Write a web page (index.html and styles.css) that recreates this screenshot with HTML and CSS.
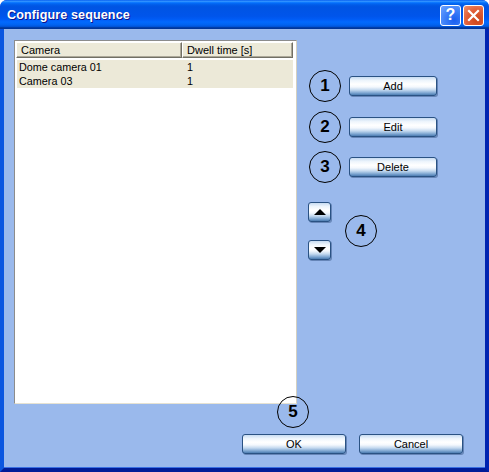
FILE: index.html
```html
<!DOCTYPE html>
<html>
<head>
<meta charset="utf-8">
<link rel="stylesheet" href="styles.css">
</head>
<body>
<div class="window">
  <div class="titlebar">
    <span class="title">Configure sequence</span>
    <div class="tb-buttons">
      <span class="tb-btn help">?</span>
      <span class="tb-btn close">
        <svg width="13" height="13" viewBox="0 0 13 13"><path d="M2 2 L11 11 M11 2 L2 11" stroke="#fff" stroke-width="2.2" stroke-linecap="square"/></svg>
      </span>
    </div>
  </div>
  <div class="client">
    <div class="main">
      <div class="listbox">
        <div class="lv-header">
          <div class="hcell c1">Camera</div>
          <div class="hcell c2">Dwell time [s]</div>
        </div>
        <div class="lv-row"><span class="cell c1">Dome camera 01</span><span class="cell c2">1</span></div>
        <div class="lv-row"><span class="cell c1">Camera 03</span><span class="cell c2">1</span></div>
      </div>
      <div class="side">
        <div class="actions">
          <div class="act"><span class="callout">1</span><button class="btn act-btn">Add</button></div>
          <div class="act"><span class="callout">2</span><button class="btn act-btn">Edit</button></div>
          <div class="act"><span class="callout">3</span><button class="btn act-btn">Delete</button></div>
        </div>
        <div class="order">
          <div class="arrows">
            <button class="btn arrow"><span class="tri up"></span></button>
            <button class="btn arrow"><span class="tri down"></span></button>
          </div>
          <span class="callout">4</span>
        </div>
      </div>
    </div>
    <div class="footer">
      <button class="btn foot-btn">OK</button>
      <button class="btn foot-btn">Cancel</button>
    </div>
    <span class="callout c5">5</span>
  </div>
</div>
</body>
</html>
```
FILE: styles.css
```css
html, body {
  margin: 0;
  padding: 0;
  background: #ffffff;
}

.window {
  width: 489px;
  height: 472px;
  display: flex;
  flex-direction: column;
  font-family: "Liberation Sans", Arial, sans-serif;
  background: #0831d9;
  border-radius: 7px 7px 0 0;
  overflow: hidden;
}

.titlebar {
  height: 29px;
  flex: none;
  display: flex;
  align-items: center;
  justify-content: space-between;
  padding: 0 5px 0 7px;
  box-sizing: border-box;
  background: linear-gradient(180deg, #0058ee 0%, #3593ff 4%, #288eff 6%, #127dff 8%, #036ffc 10%, #0262ee 14%, #0057e5 20%, #0054e3 24%, #0055eb 56%, #005bf5 66%, #026afe 76%, #0062ef 86%, #0052d6 92%, #0040ab 94%, #003092 100%);
}

.title {
  color: #ffffff;
  font-weight: bold;
  font-size: 12.6px;
  letter-spacing: 0.1px;
  text-shadow: 1px 1px 0 #0f1089;
  margin-top: 1px;
}

.tb-buttons {
  display: flex;
  gap: 2px;
  margin-top: 1px;
}

.tb-btn {
  width: 21px;
  height: 21px;
  box-sizing: border-box;
  border: 1px solid #ffffff;
  border-radius: 3px;
  display: flex;
  align-items: center;
  justify-content: center;
  color: #ffffff;
}

.help {
  background: radial-gradient(circle at 70% 75%, #1a5ef0 0%, #3d80f8 50%, #6ea4ff 100%);
  font-weight: bold;
  font-size: 16px;
  font-family: "Liberation Sans", Arial, sans-serif;
}

.close {
  background: radial-gradient(circle at 70% 75%, #cc4418 0%, #e2603a 55%, #f0926f 100%);
}

.client {
  flex: 1;
  position: relative;
  display: flex;
  flex-direction: column;
  background: #9ab9ec;
  border-left: 4px solid #0a56e0;
  border-right: 4px solid #0024b0;
  border-bottom: 4px solid #001c98;
  box-shadow: inset 0 -1px 0 #3a70e4;
}

.main {
  display: flex;
  padding: 11px 0 0 10px;
}

.listbox {
  width: 283px;
  height: 364px;
  box-sizing: border-box;
  background: #ffffff;
  border: 1px solid #8c8c8c;
  border-bottom-color: #e6e2d2;
  border-right-color: #d4d0c0;
  padding: 1px 0 0 1px;
  font-size: 10.5px;
  color: #000000;
}

.lv-header {
  display: flex;
  width: 277px;
  height: 16px;
  font-size: 11px;
}

.hcell {
  box-sizing: border-box;
  height: 16px;
  line-height: 15px;
  background: #ece9d8;
  border-top: 1px solid #ffffff;
  border-left: 1px solid #ffffff;
  border-right: 1px solid #716f64;
  border-bottom: 1px solid #716f64;
  padding-left: 4px;
  box-shadow: inset -1px -1px 0 #aca899;
}

.hcell.c1 { width: 166px; }
.hcell.c2 { width: 111px; }

.lv-row {
  display: flex;
  width: 276px;
  height: 14px;
  line-height: 14px;
  margin-left: 1px;
  background: #ece9d8;
  font-size: 10.8px;
}

.lv-header + .lv-row {
  margin-top: 2px;
}

.cell.c1 { width: 165px; padding-left: 2px; box-sizing: border-box; }
.cell.c2 { padding-left: 5px; }

.side {
  margin-left: 11px;
  display: flex;
  flex-direction: column;
}

.actions {
  margin-top: 30px;
  display: flex;
  flex-direction: column;
  gap: 8.5px;
}

.act {
  display: flex;
  align-items: center;
  gap: 8px;
}

.callout {
  width: 32px;
  height: 32px;
  box-sizing: border-box;
  border: 1.2px solid #000000;
  border-radius: 50%;
  display: flex;
  align-items: center;
  justify-content: center;
  font-weight: bold;
  font-size: 17px;
  color: #000000;
  flex: none;
}

.act .callout {
  margin-left: 1px;
}

.btn {
  box-sizing: border-box;
  border: 1px solid #2a5283;
  border-radius: 3px;
  background: linear-gradient(180deg, #c8dcf2 0%, #eef5fc 20%, #ffffff 40%, #f4f8fd 55%, #c4d9ef 72%, #7fa7d2 88%, #4c7cb1 100%);
  box-shadow: 1px 1px 0 rgba(40, 70, 120, 0.45);
  font-family: "Liberation Sans", Arial, sans-serif;
  font-size: 11px;
  color: #000000;
  padding: 0;
  display: flex;
  align-items: center;
  justify-content: center;
}

.act-btn {
  width: 88px;
  height: 20px;
}

.order {
  margin-top: 19px;
  display: flex;
  align-items: center;
  gap: 14px;
}

.arrows {
  display: flex;
  flex-direction: column;
  gap: 18px;
}

.arrow {
  width: 23px;
  height: 20px;
}

.tri {
  width: 0;
  height: 0;
  border-left: 6px solid transparent;
  border-right: 6px solid transparent;
}

.tri.up {
  border-bottom: 6px solid #000000;
}

.tri.down {
  border-top: 6px solid #000000;
}

.footer {
  margin-top: auto;
  display: flex;
  justify-content: flex-end;
  gap: 13px;
  padding: 0 22px 14px 0;
}

.foot-btn {
  width: 104px;
  height: 20px;
}

.callout.c5 {
  position: absolute;
  left: 273px;
  top: 367px;
}
```
